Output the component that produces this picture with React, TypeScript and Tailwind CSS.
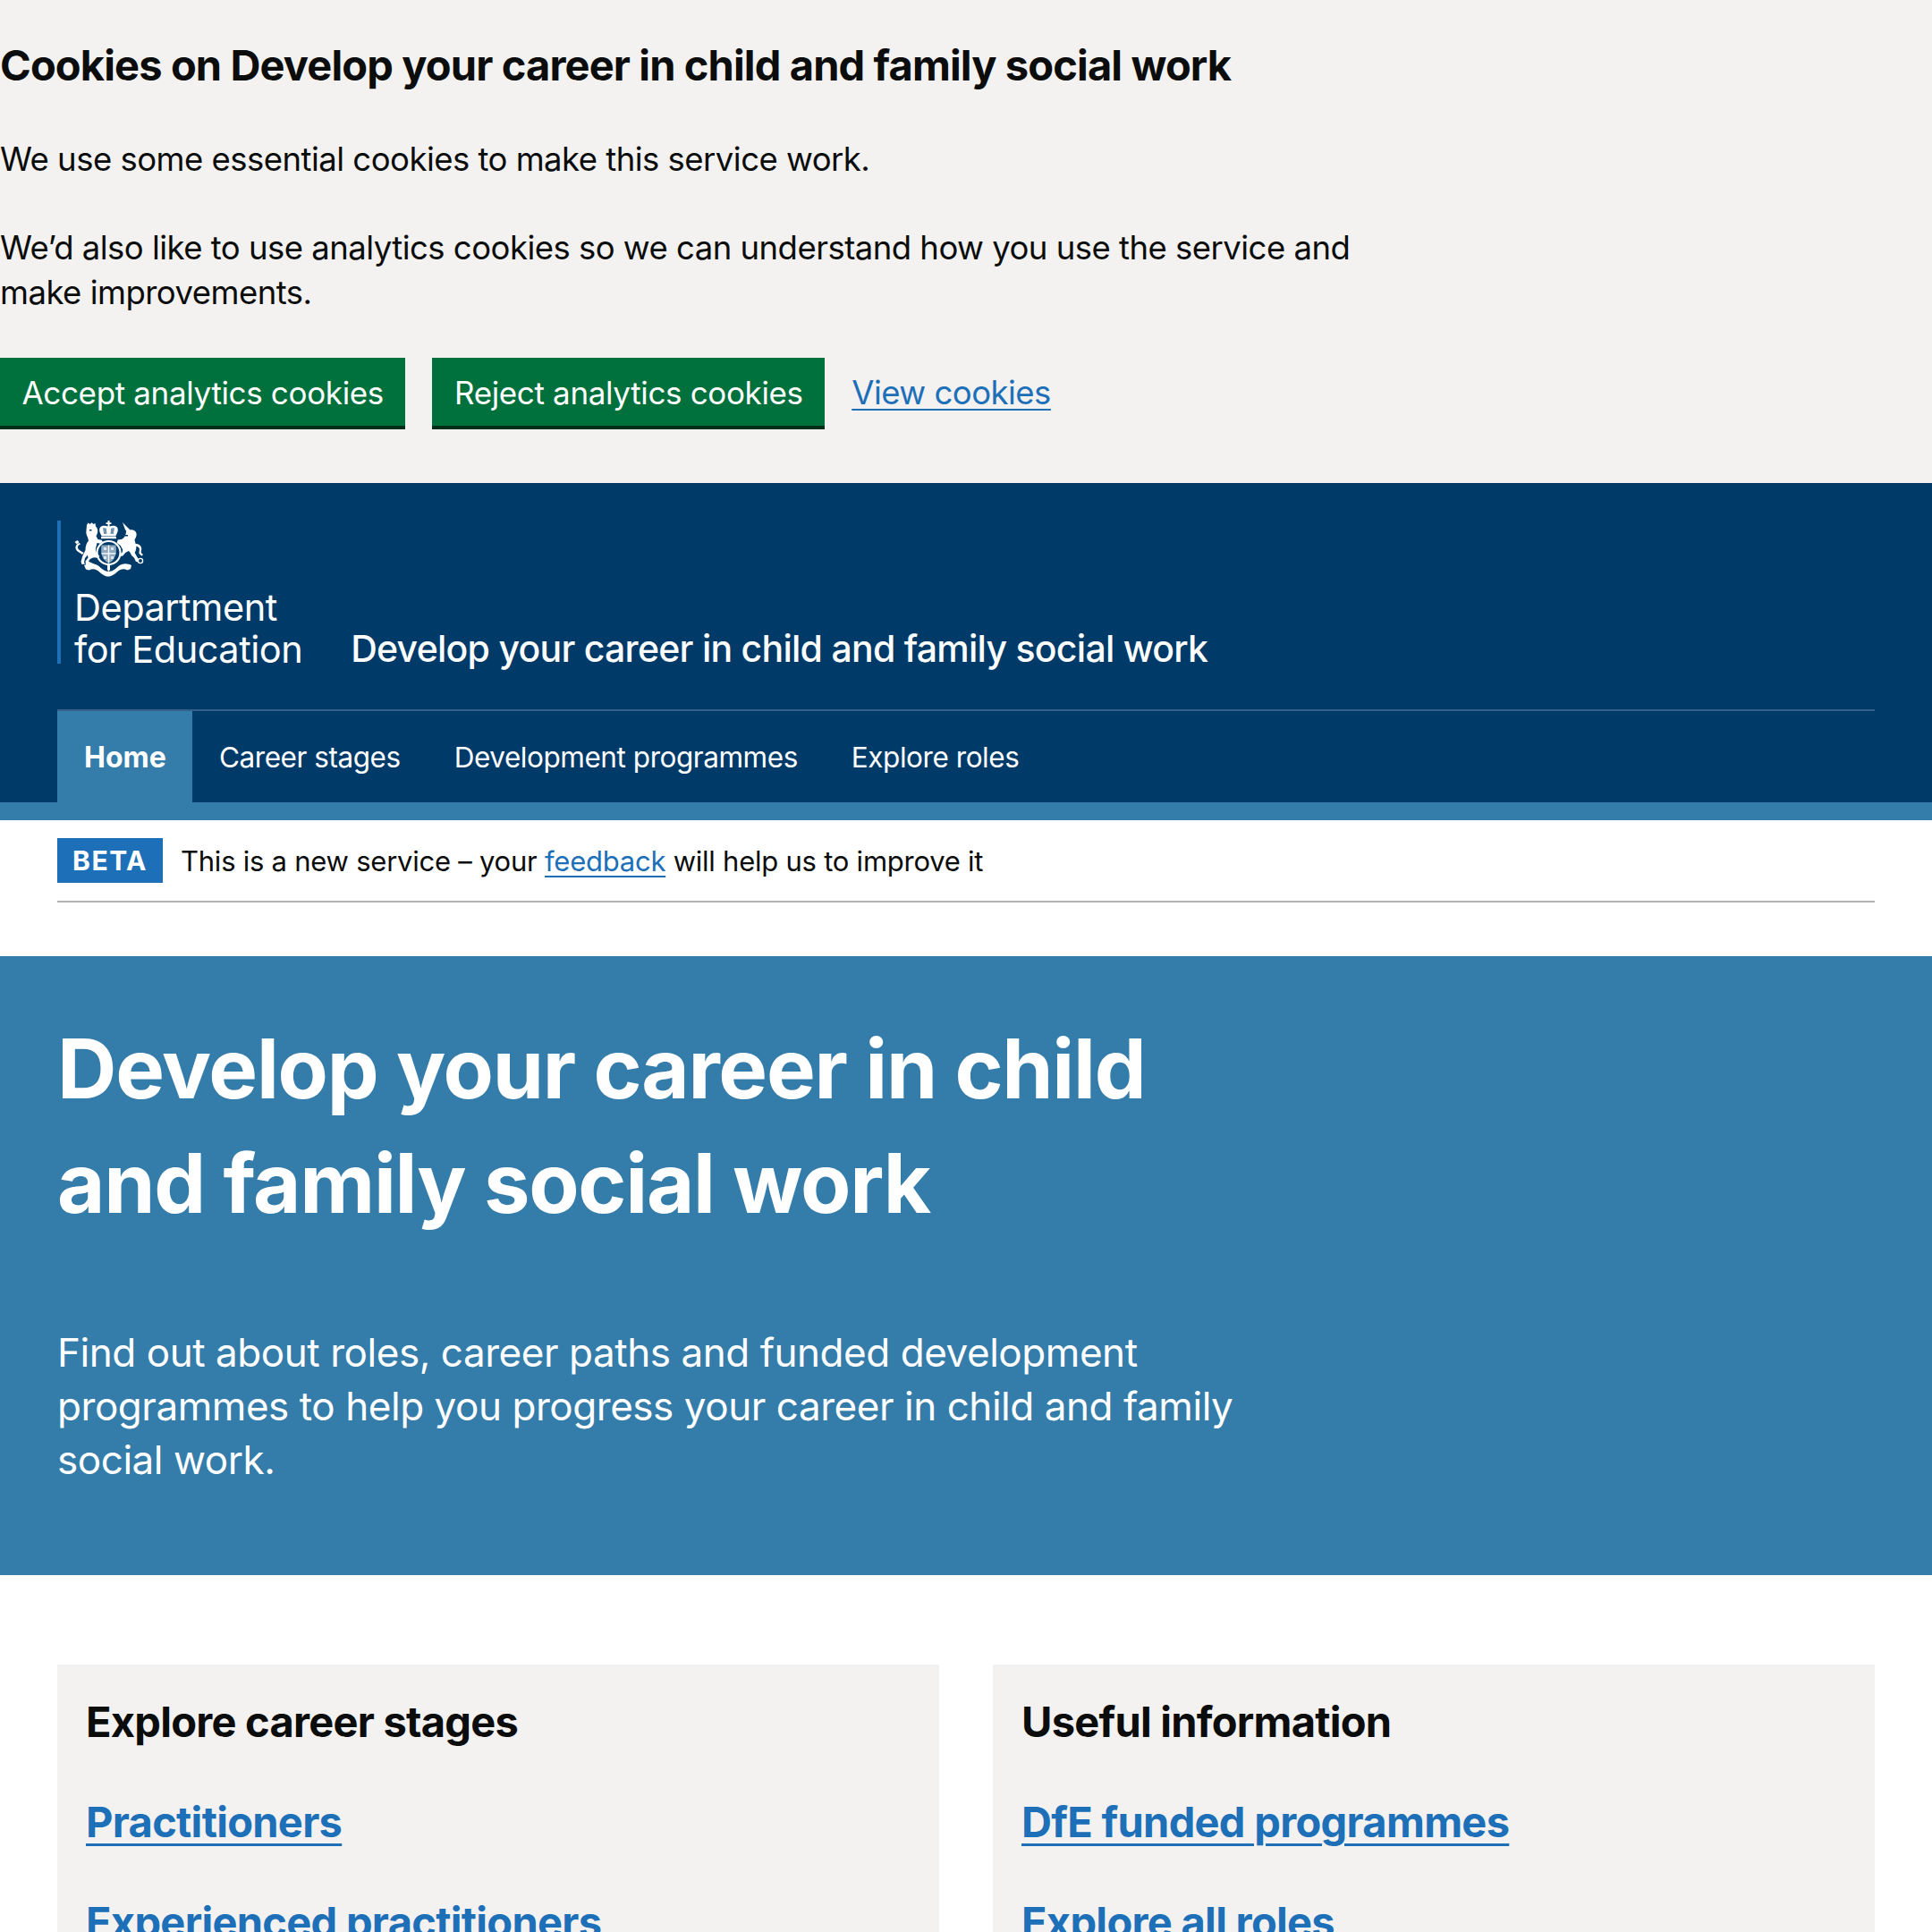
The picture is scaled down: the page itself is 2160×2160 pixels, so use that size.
import React from 'react';

const font = "font-['Inter','Noto_Sans',sans-serif]";

// Royal crest, simplified from the reference
const Crest = () => (
  <svg viewBox="5 7 80 64" className="w-[80px] h-[64px] block" fill="#fff">
    {/* crown */}
    <path d="M42.5 7h2v2.2h2v1.8h-2v2.4c3-1.2 6-1 8 .6 2 2 1.6 5.400-.6 9.200l-.6 1.300H35.700l-.6-1.300c-2.200-3.800-2.600-7.200-.6-9.200 2-1.600 5-1.800 8-.6V11h-2V9.200h2z" />
    <path d="M37 15.500c1.600-.6 3-.4 4 .4l.4 6.100h-3.200zM50 15.500c-1.600-.6-3-.4-4 .4l-.4 6.100h3.200z" fill="#003a69" opacity="0.55" />
    <rect x="35" y="25" width="17" height="2.200" />
    {/* garter and shield */}
    <circle cx="43.500" cy="43" r="13" fill="none" stroke="#fff" strokeWidth="2.200" />
    <path d="M35.500 34.500h16c1 6 .4 11-2 15-1.500 2.400-3.500 3.800-6 5-2.500-1.200-4.500-2.600-6-5-2.400-4-3-9-2-15z" fill="#8fa9c0" />
    <path d="M42.800 34.500h1.400v20h-1.400zM35.500 43.200h16v1.400h-16z" />
    <path d="M38 37h3v3h-3zM46 37h3v3h-3zM38 47h3v3h-3zM46 47h3v3h-3z" fill="#dfe7ee" />
    <path d="M42 56h3v6l-1.500 2-1.500-2z" />
    {/* lion */}
    <path d="M19 12l1.500-2.500 2 1.500 2-1.800 2 1.800 2-1 .5 3.500c2 2 2.800 4.500 2 7.500l-1.500 3.500 2 3.500 4 .8 1.500 2-3 2-3.500-.8-1 4c-1 3.500-.5 5.500 1 7.500l3 3.500-3 1.800c-3-1-5-.5-8 1.500l-1.500 2.500 4.500 2 3 1.800-1 1.500-9.500-1.500-.5-4 3-4-.5-3-3 3.500-1 5 1.500 1.500-4 .5-1-3 1.500-5.500c1-3 2.500-5 3.500-7.500 0-4 1-8 3.500-10.500l-1-4c-1.500-2.500-2-5-1.500-7.500z" />
    <path d="M14 45c-2.500-2-7-3.500-7.500-7-.4-3 2-5.500 4.500-6l1 1.500c-2 .5-3.500 2.200-3 4 .5 2.500 4 3.500 6.500 5.500z" />
    <path d="M5.500 31l3-2 2 2-2.500 2.500z" />
    <path d="M22 17h2.500v1.500H22z" fill="#003a69" />
    {/* unicorn */}
    <path d="M59 9l8.500 8.500c2.500-.5 5 .2 6.500 2.500 1 2 .8 4-.2 6l-1.300 2.500 1 4c1 2.500 1.300 5 .2 8l-1 2.500 2.500 4.500 2 3-1.500 3-2-1-1.500-3.500-3.500-3.500c-.5-2-1.500-3.500-3-4.500l-3.500 2-3 3.500-3 .5-.5-2 3-2.500.5-3-2.500-4.500-4-3 1-3.500 4-.5c2-1 3.500-2.500 4.500-4.500l1-4.500-1.500-2.500z" />
    <path d="M73 33c3-.5 6 1 7 4 .6 2-.4 4-.2 6l2.200 2-1.500 1.500-3-2.500c-.2-2.500.8-4.500.2-6-.6-1.500-2.500-2.500-4.700-2.500z" />
    <circle cx="79" cy="52" r="2.600" fill="none" stroke="#fff" strokeWidth="1.300" />
    <path d="M62 23h3v1.500h-3z" fill="#003a69" />
    {/* motto ribbon */}
    <path d="M16 57c4-1.500 9-2.500 13-1 3 1 5 3.500 7 5 2.500 2 5 3 7.500 3s5-1 7.500-3c2-1.500 4-4 7-5 4-1.500 8-.5 11 1l-1 4-3.500 1.500c-3-1.500-5.500-1.500-8-.5-3 1.500-5.500 4.500-8.500 6-1.800 1-3.500 1.500-5 1.500s-3.200-.5-5-1.500c-3-1.500-5.500-4.500-8.500-6-2.500-1-5-1-8 .5l-3.500-1z" />
  </svg>
);

const Btn = ({ children }: { children: React.ReactNode }) => (
  <button className="h-[80px] px-[24.500px] pt-[2px] bg-[#00703c] border-b-4 border-[#002d18] text-white text-[35px] leading-[50px] tracking-[-0.35px] whitespace-nowrap">
    {children}
  </button>
);

const navItems = ['Career stages', 'Development programmes', 'Explore roles'];

const Card = ({ title, links }: { title: string; links: string[] }) => (
  <div className="flex-1 bg-[#f3f2f1] px-[32px] pt-[34px] h-[400px]">
    <h2 className="text-[47px] leading-[60px] font-bold tracking-[-0.75px] text-[#0b0c0c] mb-[51px]">{title}</h2>
    <ul className="flex flex-col gap-[50px]">
      {links.map((l) => (
        <li key={l}>
          <a href="#" className="text-[47px] leading-[62px] font-bold tracking-[-0.7px] text-[#1d70b8] underline decoration-[3px] underline-offset-[7px]">{l}</a>
        </li>
      ))}
    </ul>
  </div>
);

export default function App() {
  return (
    <div className={`${font} h-[2160px] overflow-hidden bg-white text-[#0b0c0c]`}>
      {/* cookie banner */}
      <div className="h-[540px] bg-[#f3f2f1] pt-[40px]">
        <h2 className="text-[47px] leading-[66px] font-bold tracking-[-0.87px]">Cookies on Develop your career in child and family social work</h2>
        <div className="mt-[47px] w-[1560px] text-[36.500px] leading-[50px] tracking-[-0.52px]">
          <p>We use some essential cookies to make this service work.</p>
          <p className="mt-[49px]">We’d also like to use analytics cookies so we can understand how you use the service and make improvements.</p>
        </div>
        <div className="mt-[48px] flex items-center gap-[30px]">
          <Btn>Accept analytics cookies</Btn>
          <Btn>Reject analytics cookies</Btn>
          <a href="#" className="pb-[2px] text-[36.500px] leading-[50px] tracking-[-0.52px] text-[#1d70b8] underline decoration-2 underline-offset-[5px]">View cookies</a>
        </div>
      </div>

      {/* header */}
      <header className="bg-[#003a69] px-[64px] pt-[42px]">
        <div className="flex items-end h-[160px]">
          <div className="h-[160px] border-l-4 border-[#1d70b8] pl-[15px]">
            <Crest />
            <div className="text-[41.500px] leading-[47px] tracking-[-0.5px] text-white mt-[10px] whitespace-nowrap">Department<br />for Education</div>
          </div>
          <span className="ml-[54px] mb-[-7px] text-[41px] leading-[47px] tracking-[-0.74px] font-[450] text-white">Develop your career in child and family social work</span>
        </div>
        <nav className="mt-[51px] border-t-2 border-[#33618a] flex h-[104px] text-white text-[31.500px] tracking-[-0.45px]">
          <a className="h-full w-[151px] px-[30px] bg-[#347ca9] text-[32px] font-bold tracking-normal flex items-center pt-[2px]">Home</a>
          {navItems.map((n) => (
            <a key={n} className="h-full px-[30px] flex items-center pt-[2px]">{n}</a>
          ))}
        </nav>
      </header>
      <div className="h-[20px] bg-[#347ca9]" />

      {/* phase banner */}
      <div className="mx-[64px] h-[92px] border-b-2 border-[#b1b4b6] pt-[20px] flex items-start gap-[20px]">
        <strong className="h-[50px] w-[118px] bg-[#1d70b8] text-white text-[30px] leading-[50px] tracking-[1.5px] font-bold text-center">BETA</strong>
        <p className="text-[31px] leading-[52px] tracking-[-0.24px]">This is a new service – your <a href="#" className="text-[#1d70b8] underline decoration-2 underline-offset-[5px]">feedback</a> will help us to improve it</p>
      </div>

      {/* hero */}
      <section className="mt-[60px] h-[692px] bg-[#347ca9] px-[64px] pt-[62px] text-white">
        <h1 className="w-[1400px] text-[92px] leading-[128px] font-bold tracking-[-1.25px]">Develop your career in child and family social work</h1>
        <p className="mt-[95px] w-[1400px] text-[44px] leading-[60px] tracking-[-0.45px]">Find out about roles, career paths and funded development programmes to help you progress your career in child and family social work.</p>
      </section>

      {/* cards */}
      <div className="mt-[100px] mx-[64px] flex gap-[60px]">
        <Card title="Explore career stages" links={['Practitioners', 'Experienced practitioners']} />
        <Card title="Useful information" links={['DfE funded programmes', 'Explore all roles']} />
      </div>
    </div>
  );
}
